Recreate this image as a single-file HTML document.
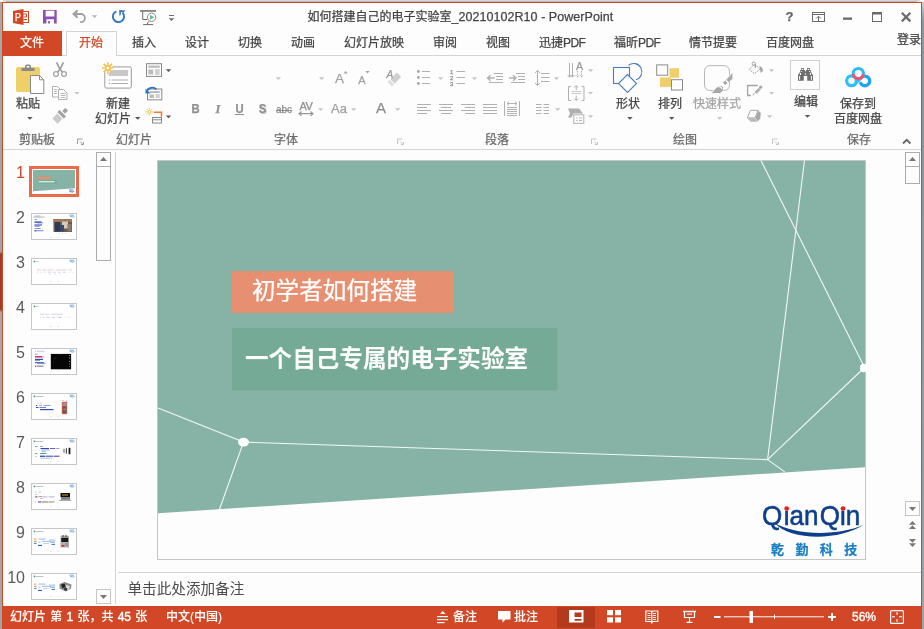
<!DOCTYPE html>
<html lang="zh-CN">
<head>
<meta charset="utf-8">
<title>如何搭建自己的电子实验室_20210102R10 - PowerPoint</title>
<style>
html,body{margin:0;padding:0}
body{width:924px;height:629px;position:relative;overflow:hidden;background:#9aa3a8;font-family:"Liberation Sans","Noto Sans CJK SC",sans-serif;font-size:12px;color:#444}
.a{position:absolute}
.t{position:absolute;white-space:nowrap;line-height:16px;height:16px;-webkit-text-stroke:0.250px currentColor}
.g{color:#6a6a6a}
.d{color:#a4a4a4}
#win{position:absolute;left:2px;top:2px;width:920px;height:627px;background:#fdfdfd;border:1px solid #d24726;border-bottom:0;box-sizing:border-box}
svg{position:absolute;overflow:visible}
.w{color:#fff;-webkit-text-stroke:0.100px #fff}
</style>
</head>
<body>
<div id="root" style="position:absolute;left:0;top:0;width:924px;height:629px;will-change:transform">
<div class="a" style="left:0;top:0;width:924px;height:1px;background:#d6d6d6"></div>
<div class="a" style="left:0;top:1px;width:924px;height:1px;background:#b4bcc0"></div>
<div class="a" style="left:0;top:0;width:3px;height:1px;background:#fff"></div>
<div class="a" style="left:0;top:1px;width:6px;height:1px;background:#e8eaea"></div>
<div class="a" style="left:920px;top:0;width:4px;height:1px;background:#fff"></div>
<div class="a" style="left:917px;top:1px;width:7px;height:1px;background:#e8eaea"></div>
<div class="a" style="left:0;top:2px;width:2px;height:627px;background:linear-gradient(#a8a8a8 0,#a0a4a8 38%,#a0a4a8 39.800%,#a03c28 40.200%,#a03c28 49%,#a8a8a8 49.500%,#a4a4a4 100%)"></div>
<div class="a" style="left:922px;top:2px;width:2px;height:627px;background:linear-gradient(#d0d0d0 0,#8a98a4 3%,#8a98a4 30%,#909ca4 60%,#a0a0a0 100%)"></div>
<div id="win"></div>
<!-- TITLEBAR -->
<div id="titlebar">
<div class="t" style="left:307.500px;top:9px;font-size:12px;color:#444">如何搭建自己的电子实验室<span style="font-size:12.500px;letter-spacing:0.050px">_20210102R10 - PowerPoint</span></div>
<div class="t" style="left:13px;top:10px;width:10px;height:14px;line-height:14px;font-size:11px;color:#fff;z-index:3;text-align:center;transform:scaleX(0.800)">P</div>
<div class="t" style="left:785px;top:9px;font-size:13px;font-weight:bold;color:#666;width:9px;text-align:center">?</div>
<svg class="a" style="left:0;top:0" width="924" height="34" viewBox="0 0 924 34">
<!-- ppt icon -->
<rect x="21.500" y="11.500" width="7" height="11" fill="#fff" stroke="#d24726" stroke-width="1"/>
<path d="M23.500,14 h3 v3 h-3 M23.500,19.500 h3.500" stroke="#d24726" stroke-width="1" fill="none"/>
<polygon points="13,11 23.500,9 23.500,25 13,23" fill="#d24726"/>
<!-- save -->
<path d="M43,10 h13.700 v13.600 h-13.700z M45.600,10.800 v5.600 h8.800 v-5.600z M46.400,19.300 v4.300 h1.800 v-2.500 h1.800 v2.500 h4 v-4.300z" fill="#8d4fb3" fill-rule="evenodd"/>
<!-- undo -->
<path d="M74.500,14 h6.300 a4.100,4.100 0 0 1 0,8.200 h-0.600" fill="none" stroke="#a0a0a0" stroke-width="1.800"/>
<path d="M72,14 L76.800,9.800 L78.200,10.300 L76.300,14 L78.200,17.700 L76.800,18.200z" fill="#a0a0a0"/>
<polygon points="91.900,15.200 97.300,15.200 94.600,18" fill="#b4b4b4"/>
<!-- redo -->
<path d="M122.600,12.700 A5.600,5.600 0 1 1 116.400,11.300" fill="none" stroke="#2e75c2" stroke-width="1.900"/>
<path d="M119.200,10 L125.300,10.400 L123.600,12.400 L121,12 L120.600,15.300 L119.400,15.700z" fill="#2e75c2"/>
<!-- slideshow from start -->
<rect x="140" y="10.200" width="16" height="1.500" fill="#6a6a6a"/>
<path d="M142.700,11.500 v8 h4.500 M148.500,21.500 l-1.500,3 M143.200,24.600 h10" fill="none" stroke="#6a6a6a" stroke-width="1"/>
<circle cx="151.600" cy="17.300" r="4.200" fill="#fff" stroke="#7a7a7a" stroke-width="0.900"/>
<polygon points="150,14.800 150,19.800 154.300,17.300" fill="#6cb893"/>
<!-- customize -->
<rect x="169" y="15" width="5" height="1" fill="#6a6a6a"/>
<polygon points="168.700,18.300 174.300,18.300 171.500,21" fill="#6a6a6a"/>
<!-- ribbon display -->
<rect x="812.500" y="12.500" width="12" height="9" fill="none" stroke="#6a6a6a" stroke-width="1"/>
<rect x="812" y="14" width="13" height="1" fill="#6a6a6a"/>
<path d="M818.500,16.300 v5 M816.200,18.500 l2.300,-2.300 l2.300,2.300" fill="none" stroke="#6a6a6a" stroke-width="1"/>
<!-- minimize -->
<rect x="843" y="17.500" width="9" height="2.300" fill="#6a6a6a"/>
<!-- maximize -->
<rect x="872.500" y="12.500" width="9" height="9" fill="none" stroke="#6a6a6a" stroke-width="1"/>
<rect x="872" y="12" width="10" height="2.500" fill="#6a6a6a"/>
<!-- close -->
<path d="M901.800,12.800 l8.600,8.600 M910.400,12.800 l-8.600,8.600" stroke="#6a6a6a" stroke-width="2.200" fill="none"/>
</svg>
</div>
<!-- TABS -->
<div id="tabs">
<div class="a" style="left:3px;top:55px;width:918px;height:1px;background:#d4d4d4"></div>
<div class="a" style="left:3px;top:31px;width:59px;height:25px;background:#d24726"></div>
<div class="t" style="left:20px;top:35px;color:#fff">文件</div>
<div class="a" style="left:66px;top:31px;width:51px;height:25px;background:#fdfdfd;border:1px solid #d4d4d4;border-bottom:0;box-sizing:border-box"></div>
<div class="t" style="left:79px;top:35px;color:#d24726">开始</div>
<div class="t" style="left:132px;top:35px">插入</div>
<div class="t" style="left:185px;top:35px">设计</div>
<div class="t" style="left:238px;top:35px">切换</div>
<div class="t" style="left:291px;top:35px">动画</div>
<div class="t" style="left:344px;top:35px">幻灯片放映</div>
<div class="t" style="left:433px;top:35px">审阅</div>
<div class="t" style="left:486px;top:35px">视图</div>
<div class="t" style="left:539px;top:35px">迅捷<span style="letter-spacing:-0.600px">PDF</span></div>
<div class="t" style="left:614px;top:35px">福昕<span style="letter-spacing:-0.600px">PDF</span></div>
<div class="t" style="left:689px;top:35px">情节提要</div>
<div class="t" style="left:766px;top:35px">百度网盘</div>
<div class="t" style="left:897px;top:32px">登录</div>
</div>
<!-- RIBBON -->
<div id="ribbon">
<div class="a" style="left:3px;top:149px;width:918px;height:1px;background:#d4d4d4"></div>
<!-- labels -->
<div class="t" style="left:16px;top:96px;width:24px;text-align:center">粘贴</div>
<div class="t g" style="left:19px;top:132px">剪贴板</div>
<div class="t" style="left:106px;top:96px">新建</div>
<div class="t" style="left:95px;top:111px">幻灯片</div>
<div class="t g" style="left:116px;top:132px">幻灯片</div>
<div class="t g" style="left:274px;top:132px">字体</div>
<div class="t g" style="left:485px;top:132px">段落</div>
<div class="t" style="left:616px;top:96px">形状</div>
<div class="t" style="left:658px;top:96px">排列</div>
<div class="t d" style="left:693px;top:96px">快速样式</div>
<div class="t g" style="left:673px;top:132px">绘图</div>
<div class="t" style="left:794px;top:94px">编辑</div>
<div class="t" style="left:840px;top:96px">保存到</div>
<div class="t" style="left:834px;top:111px">百度网盘</div>
<div class="t g" style="left:847px;top:132px">保存</div>
<!-- font buttons (disabled) -->
<div class="t" style="left:191px;top:101px;font-size:12.500px;font-weight:bold;color:#8e8e8e;width:9px;text-align:center;transform:scaleX(0.900)">B</div>
<div class="t" style="left:213.500px;top:101px;font-size:12.500px;font-style:italic;color:#8e8e8e;width:9px;text-align:center;font-family:'Liberation Serif',serif;font-weight:bold">I</div>
<div class="t" style="left:235px;top:101px;font-size:12.500px;color:#8e8e8e;width:9px;text-align:center;font-weight:bold;transform:scaleX(0.900)">U</div>
<div class="a" style="left:235px;top:114px;width:9px;height:1px;background:#8e8e8e"></div>
<div class="t" style="left:258px;top:101px;font-size:12.500px;font-weight:bold;color:#8e8e8e;width:9px;text-align:center;text-shadow:1px 1px 0 #ccc;transform:scaleX(0.900)">S</div>
<div class="t" style="left:276px;top:102px;font-size:10px;color:#8e8e8e;width:16px;text-align:center;text-decoration:line-through">abc</div>
<div class="t" style="left:298px;top:98px;font-size:11px;color:#8e8e8e;width:16px;text-align:center;letter-spacing:-0.500px">AV</div>
<div class="t" style="left:331px;top:101px;font-size:13px;color:#a0a0a0;width:15px;text-align:center">Aa</div>
<div class="t" style="left:376px;top:100px;font-size:15px;color:#8e8e8e;width:10px;text-align:center">A</div>
<div class="t" style="left:335px;top:71px;font-size:13.500px;color:#a0a0a0;width:9px;text-align:center">A</div>
<div class="t" style="left:357.500px;top:72px;font-size:11px;color:#a0a0a0;width:9px;text-align:center">A</div>
<svg class="a" style="left:0;top:0" width="924" height="152" viewBox="0 0 924 152">
<!-- dropdown arrows dark -->
<g fill="#555">
<polygon points="27.200,117 32.600,117 29.900,119.800"/>
<polygon points="135,117 140.400,117 137.700,119.800"/>
<polygon points="165.800,69.300 171.200,69.300 168.500,72"/>
<polygon points="165.800,115.500 171.200,115.500 168.500,118.200"/>
<polygon points="627.200,117 632.600,117 629.900,119.800"/>
<polygon points="669,117 674.400,117 671.700,119.800"/>
<polygon points="804.800,115 810.200,115 807.500,117.800"/>
</g>
<!-- dropdown arrows light -->
<g fill="#c4c4c4">
<polygon points="74.300,92 79.500,92 76.900,94.600"/>
<polygon points="275.800,77.300 281,77.300 278.400,80"/>
<polygon points="319,77.300 324.200,77.300 321.600,80"/>
<polygon points="318,108.200 323.200,108.200 320.600,110.900"/>
<polygon points="351,108.200 356.200,108.200 353.600,110.900"/>
<polygon points="395,108.200 400.200,108.200 397.600,110.900"/>
<polygon points="438,77.300 443.200,77.300 440.600,80"/>
<polygon points="472,77.300 477.200,77.300 474.600,80"/>
<polygon points="554,77.300 559.200,77.300 556.600,80"/>
<polygon points="555,108.200 560.200,108.200 557.600,110.900"/>
<polygon points="588,69.300 593.200,69.300 590.600,72"/>
<polygon points="588,92 593.200,92 590.600,94.600"/>
<polygon points="588,115.300 593.200,115.300 590.600,118"/>
<polygon points="717,117 722.200,117 719.600,119.700"/>
<polygon points="769,69.300 774.200,69.300 771.600,72"/>
<polygon points="769,92 774.200,92 771.600,94.600"/>
<polygon points="767,115.300 772.200,115.300 769.600,118"/>
</g>
<!-- grow/shrink triangles -->
<polygon points="343.400,73.600 347.800,73.600 345.600,71" fill="#a6a6a6"/>
<polygon points="365.300,71 369.700,71 367.500,73.600" fill="#a6a6a6"/>
<!-- dialog launchers -->
<g fill="none" stroke="#9a9a9a" stroke-width="1">
<path d="M82.500,139 h-5 v5 M80,141.500 l3,3 M83.500,142 v2.500 h-2.500"/>
<path d="M402.500,139 h-5 v5 M400,141.500 l3,3 M403.500,142 v2.500 h-2.500" stroke="#c4c4c4"/>
<path d="M596.500,139 h-5 v5 M594,141.500 l3,3 M597.500,142 v2.500 h-2.500" stroke="#c4c4c4"/>
<path d="M777.500,139 h-5 v5 M775,141.500 l3,3 M778.500,142 v2.500 h-2.500" stroke="#c4c4c4"/>
</g>
<!-- collapse chevron -->
<path d="M903,143.500 l3.700,-3.700 l3.700,3.700" fill="none" stroke="#666" stroke-width="1.800"/>

<!-- PASTE -->
<rect x="16" y="67" width="24" height="25" rx="2" fill="#efcf6a"/>
<path d="M21.500,71 v-3 h3.500 v-1.500 a2,2 0 0 1 2,-2 h2 a2,2 0 0 1 2,2 v1.500 h3.500 v3z" fill="#8a8a8a"/>
<rect x="26.700" y="66" width="2.600" height="1.500" fill="#fff"/>
<path d="M30.500,75.500 h9 l4.300,4.300 v13.700 h-13.300z" fill="#fff" stroke="#8a8a8a" stroke-width="1"/>
<path d="M39.500,75.500 v4.300 h4.300" fill="none" stroke="#8a8a8a" stroke-width="1"/>
<!-- scissors -->
<g fill="none" stroke="#a0a0a0">
<circle cx="56" cy="74" r="2.400" stroke-width="1.200"/><circle cx="64" cy="74" r="2.400" stroke-width="1.200"/>
<path d="M57.600,72 L60,69.300 L63.400,62.300 M62.400,72 L60,69.300 L56.600,62.300" stroke-width="1.700" stroke-linejoin="round"/>
</g>
<!-- copy -->
<g fill="#fff" stroke="#b0b0b0" stroke-width="1">
<path d="M52.500,86.500 h5 l3,3 v7.500 h-8z"/>
<path d="M58.500,89.500 h5 l3.500,3.500 v6.500 h-8.500z"/>
</g>
<path d="M54,89.500 h3 M54,91.500 h3 M54,93.500 h3 M60.500,93.500 h5 M60.500,95.500 h5 M60.500,97.500 h5" stroke="#b0b0b0" stroke-width="0.900" fill="none"/>
<!-- format painter -->
<g transform="translate(60.700,115.300) rotate(-45)">
<rect x="-8.200" y="-3.600" width="7" height="7.200" fill="#cbcbcb"/>
<rect x="-0.200" y="-4.600" width="3.200" height="9.200" rx="0.500" fill="#a4a4a4"/>
<rect x="4.300" y="-1.900" width="4.200" height="3.800" rx="0.500" fill="#a0a0a0"/>
</g>

<!-- NEW SLIDE -->
<rect x="104.800" y="66.900" width="26.500" height="21.200" rx="1.500" fill="#fff" stroke="#999" stroke-width="1"/>
<rect x="108.600" y="70" width="19.500" height="6" fill="#c8c8c8"/>
<path d="M108.600,80 h1.500 M111.500,80 h16.500 M108.600,83.500 h1.500 M111.500,83.500 h16.500" stroke="#aaa" stroke-width="1" fill="none"/>
<circle cx="107.800" cy="68" r="5" fill="#fff"/>
<circle cx="107.800" cy="68" r="2.400" fill="#fff" stroke="#f2c14a" stroke-width="1.600"/>
<path d="M107.800,62.200 v2.600 M107.800,71.200 v2.600 M102,68 h2.600 M111,68 h2.600 M103.700,63.900 l1.900,1.900 M110,70.200 l1.900,1.900 M103.700,72.100 l1.900,-1.900 M110,65.800 l1.900,-1.900" stroke="#f2c14a" stroke-width="1.700" fill="none"/>
<!-- layout -->
<rect x="146.500" y="63.700" width="15" height="12.700" fill="#fff" stroke="#888" stroke-width="1"/>
<rect x="148.300" y="65.500" width="11.400" height="2.300" fill="#bbb"/>
<rect x="148.300" y="69.500" width="5" height="5" fill="#bbb"/>
<path d="M155,70 h4.700 M155,72 h4.700 M155,74 h4.700" stroke="#999" stroke-width="0.900" fill="none"/>
<!-- reset -->
<rect x="147.500" y="89" width="14.300" height="10.800" fill="#fff" stroke="#888" stroke-width="1"/>
<rect x="149.500" y="91" width="10.300" height="2" fill="#bbb"/>
<rect x="149.500" y="94.500" width="4.500" height="3.500" fill="#bbb"/>
<path d="M155.500,95 h4.300 M155.500,97 h4.300" stroke="#999" stroke-width="0.900" fill="none"/>
<path d="M146.500,92.500 c1,-5 7,-6.500 10,-3" fill="none" stroke="#2e75c2" stroke-width="1.700"/>
<path d="M145.500,88.500 v5 h5z" fill="#2e75c2"/>
<!-- section -->
<circle cx="149.300" cy="111.800" r="1.500" fill="none" stroke="#f0c24e" stroke-width="1"/>
<path d="M149.300,108 v1.500 M149.300,114 v1.500 M145.500,111.800 h1.500 M151.500,111.800 h1.500 M146.600,109.100 l1,1 M151,113.500 l1,1 M146.600,114.500 l1,-1 M151,110.100 l1,-1" stroke="#f0c24e" stroke-width="1" fill="none"/>
<path d="M154,112.300 h7.500 v4.500" fill="none" stroke="#ed7d31" stroke-width="1.600"/>
<rect x="152.500" y="117.500" width="9" height="5.500" fill="#fff" stroke="#888" stroke-width="1"/>
<path d="M152.500,119.800 h9" stroke="#888" stroke-width="1"/>

<!-- clear formatting -->
<g transform="translate(395.800,78) rotate(-45)">
<rect x="-4.600" y="-3.100" width="9.200" height="6.200" rx="0.800" fill="#d0d0d0"/>
<rect x="-8.600" y="-3.100" width="3" height="6.200" fill="#dcdcdc"/>
</g>
<!-- AV arrow -->
<path d="M299,113.700 h14 M301.500,111.500 l-2.500,2.200 l2.500,2.200 M310.500,111.500 l2.500,2.200 l-2.500,2.200" fill="none" stroke="#989898" stroke-width="1.200"/>

<!-- PARAGRAPH -->
<g fill="none" stroke="#b0b0b0" stroke-width="1">
<path d="M422,71.500 h8 M422,77.500 h8 M422,83.500 h8"/>
<path d="M456.500,71.500 h8.500 M456.500,77.500 h8.500 M456.500,83.500 h8.500"/>
<!-- decrease indent -->
<path d="M494,73.500 h9 M496,76.500 h7 M496,79.500 h7 M489,82.500 h14" stroke-dasharray="none"/>
<path d="M487.500,78 h7 M490.500,75.300 l-3,2.700 l3,2.700" stroke-width="1.400"/>
<!-- increase indent -->
<path d="M516,73.500 h9 M518,76.500 h7 M518,79.500 h7 M511,82.500 h14"/>
<path d="M509,78 h7 M513,75.300 l3,2.700 l-3,2.700" stroke-width="1.400"/>
<!-- line spacing -->
<path d="M541,73.500 h8.500 M541,77.500 h8.500 M541,81.500 h8.500"/>
<path d="M537.500,70.500 v15 M535,73.200 l2.500,-2.700 l2.500,2.700 M535,82.800 l2.500,2.700 l2.500,-2.700" stroke-width="1"/>
<!-- align left -->
<path d="M417,104.500 h14 M417,107.500 h10 M417,110.500 h14 M417,113.500 h10"/>
<path d="M439,104.500 h14 M441,107.500 h10 M439,110.500 h14 M441,113.500 h10"/>
<path d="M461,104.500 h14 M465,107.500 h10 M461,110.500 h14 M465,113.500 h10"/>
<path d="M483,104.500 h14 M483,107.500 h14 M483,110.500 h14 M483,113.500 h14"/>
<!-- distributed -->
<path d="M504.500,101 v15 M519.500,101 v15 M507,107.500 h10 M507,109.500 h10 M507,111.500 h10 M507,113.500 h10 M507,115.500 h10"/>
<path d="M507,103.500 h10 M509,101.700 l-2,1.800 l2,1.800 M515,101.700 l2,1.800 l-2,1.800"/>
<!-- columns -->
<path d="M536,104.500 h5.500 M536,107.500 h5.500 M536,110.500 h5.500 M536,113.500 h5.500 M543.500,104.500 h5.500 M543.500,107.500 h5.500 M543.500,110.500 h5.500 M543.500,113.500 h5.500" stroke-width="1.200"/>
<!-- text direction -->
<path d="M569.500,63 v14 M572.500,63 v14 M567.700,75 l1.800,2.200 l1.800,-2.200 M570.700,75 l1.800,2.200 l1.800,-2.200"/>
<path d="M577.500,71 v6 M581.500,71 v6 M575.700,75 l1.800,2.200 l1.800,-2.200 M579.700,75 l1.800,2.200 l1.800,-2.200" stroke-dasharray="1.500,1"/>
<!-- align text -->
<path d="M571,86.500 h-2.500 v14 h2.500 M581.500,86.500 h2.500 v14 h-2.500"/>
<path d="M571.500,91.500 h9.500 M571.500,93.500 h9.500" stroke="#c8c8c8"/>
<path d="M576.200,85.500 v4.500 M574.200,87.500 l2,-2 l2,2 M576.200,95.500 v5 M574.200,98.500 l2,2 l2,-2"/>
</g>
<g fill="#a8a8a8">
<circle cx="418.400" cy="71.500" r="1.450"/><circle cx="418.400" cy="77.500" r="1.450"/><circle cx="418.400" cy="83.500" r="1.450"/>
</g>
<!-- smartart -->
<path d="M568,108.500 h11 l4,5 h-9.500 l-2,4 h-3.500 l2,-4z" fill="#b0b0b0"/>
<rect x="573.800" y="114.800" width="10" height="8.500" fill="#fff" stroke="#b0b0b0" stroke-width="1"/>
<path d="M576,118 h1.500 M579,118 h3 M576,120.500 h1.500 M579,120.500 h3" stroke="#b0b0b0" stroke-width="0.900"/>

<!-- SHAPES -->
<g fill="none" stroke="#4a7ebb" stroke-width="1.100">
<path d="M628.500,65.200 a8.300,8.300 0 1 1 7.500,14.500"/>
<rect x="613.500" y="67.500" width="16" height="16" fill="#fdfdfd"/>
<path d="M627.500,74.500 l9,9 l-9,9 l-9,-9z" fill="#fff"/>
</g>
<!-- ARRANGE -->
<rect x="669.500" y="68.200" width="9.600" height="9.500" fill="#efcf6a"/>
<rect x="660" y="77.400" width="11" height="9.500" fill="#efcf6a"/>
<rect x="656.700" y="64.900" width="11" height="10.300" fill="#fff" stroke="#8a8a8a" stroke-width="1"/>
<rect x="671.500" y="79.700" width="11" height="10.300" fill="#fff" stroke="#8a8a8a" stroke-width="1"/>
<!-- QUICK STYLES -->
<rect x="704.500" y="65.600" width="25" height="25" rx="5.500" fill="#fdfdfd" stroke="#b8b8b8" stroke-width="1"/>
<g stroke="#fdfdfd" stroke-width="0.900" stroke-linejoin="round">
<path d="M732.900,72 L732.900,79 L728.600,82.600 L725.800,79.800z" fill="#a8a8a8"/>
<path d="M722.600,82.600 L725.300,80.300 L727.800,82.900 L725.100,85.400z" fill="#a0a0a0"/>
<path d="M710.900,93.600 C714,90.500 716,87 719,85.600 C721.500,84.800 723.900,86.600 723.700,89 C723,91.500 721.500,93 719.500,93.600z" fill="#a8a8a8"/>
</g>
<path d="M718.300,87 c1.200,-0.900 3.200,0 3.600,2.200" fill="none" stroke="#fdfdfd" stroke-width="1.200"/>
<!-- fill / outline / effects -->
<g fill="none" stroke="#a4a4a4" stroke-width="1">
<path d="M749.300,69.400 L754.700,64 L760,69.400 L754.300,73.700z" stroke-dasharray="1.800,0.700"/>
<circle cx="753.800" cy="63.700" r="1.700"/>
<path d="M755.400,64.500 v3.500" stroke-width="1.200"/>
<path d="M757.800,85.500 h-10.200 v10 h3.300" stroke-width="1.300"/>
</g>
<path d="M759,66 c2.500,0.500 4.200,2.500 3.800,5 l-2.300,2 c0,-3 -0.500,-5 -1.500,-7z" fill="#a0a0a0"/>
<path d="M752.300,95.400 l1.500,-2.600 l1.100,1.100z" fill="#b0b0b0"/>
<path d="M754.500,92 l4.300,-4.200 l1.900,1.900 l-4.300,4.200z" fill="#b0b0b0"/>
<circle cx="760.700" cy="87.200" r="1.600" fill="#a8a8a8"/>
<path d="M750.400,110.300 L758,110.300 L755.200,117.900 L747.300,117.900z" fill="#fdfdfd" stroke="#a8a8a8" stroke-width="1" stroke-linejoin="round"/>
<path d="M758.300,110.500 L760.800,113 L760.300,118.500 L757.600,121.500 L755.500,118z" fill="#a8a8a8"/>
<path d="M747.300,118.300 L755.200,118.300 L757.400,121.700 L750.800,121.700z" fill="#b8b8b8"/>
<!-- EDIT -->
<rect x="790.500" y="60.500" width="29" height="29" fill="#fdfdfd" stroke="#d0d0d0" stroke-width="1"/>
<g fill="#6e6e6e">
<rect x="801.200" y="68" width="2.600" height="3"/><rect x="807.200" y="68" width="2.600" height="3"/>
<rect x="800.200" y="70" width="4.700" height="5.500"/><rect x="806.100" y="70" width="4.700" height="5.500"/>
<rect x="798" y="74.300" width="5.800" height="6.400" rx="0.500"/><rect x="807.200" y="74.300" width="5.800" height="6.400" rx="0.500"/>
<rect x="799.200" y="72.500" width="2" height="3"/><rect x="809.800" y="72.500" width="2" height="3"/>
<rect x="803.800" y="71.300" width="3.400" height="4.700"/>
</g>
<g fill="#fdfdfd">
<rect x="799.100" y="76" width="1" height="3.800"/><rect x="810.900" y="76" width="1" height="3.800"/>
<rect x="800" y="73" width="1" height="2"/><rect x="810" y="73" width="1" height="2"/>
<circle cx="802.500" cy="69.400" r="0.550"/><circle cx="808.500" cy="69.400" r="0.550"/>
<circle cx="801.400" cy="71.500" r="0.550"/><circle cx="809.600" cy="71.500" r="0.550"/>
<circle cx="805.500" cy="74" r="0.650"/>
</g>
<!-- BAIDU -->
<g fill="none">
<path d="M854.300,84.300 L861.500,77" stroke="#2cbaf5" stroke-width="3.600"/>
<path d="M860.700,83.400 A4.850,4.850 0 1 0 861.200,77.700" stroke="#1ca4f8" stroke-width="3.300" stroke-linecap="round"/>
<circle cx="851.500" cy="80.800" r="4.850" stroke="#2cc0f5" stroke-width="3.300" fill="#fdfdfd"/>
<circle cx="858.300" cy="73.500" r="5.100" stroke="#30b8f8" stroke-width="3" fill="#fdfdfd"/>
<path d="M853.250,74.200 A5.100,5.100 0 0 0 863.350,74.200" stroke="#f0556c" stroke-width="3"/>
</g>
</svg>
<div class="t" style="left:450px;top:67.500px;height:8px;line-height:8px;font-size:6px;color:#909090">1</div>
<div class="t" style="left:450px;top:73.500px;height:8px;line-height:8px;font-size:6px;color:#909090">2</div>
<div class="t" style="left:450px;top:79.500px;height:8px;line-height:8px;font-size:6px;color:#909090">3</div>
<div class="t" style="left:576px;top:61px;height:10px;line-height:10px;font-size:10.500px;color:#999">A</div>
<div class="t" style="left:386.500px;top:70px;height:10px;line-height:10px;font-size:10px;color:#999;font-style:italic">A</div>
</div>
<!-- THUMBS -->
<div id="thumbs">
<div class="a" style="left:115px;top:152px;width:1px;height:452px;background:#d4d4d4"></div>
<div class="t" style="left:0px;width:25px;text-align:right;top:164px;height:18px;line-height:18px;font-size:16px;-webkit-text-stroke:0;color:#d24726">1</div>
<div class="a" style="left:29px;top:166px;width:50px;height:31px;box-sizing:border-box;border:3px solid #ea6b47;background:#fff"></div>
<svg class="a" style="left:33px;top:170px" width="42" height="24" viewBox="0 0 42 24"><rect width="42" height="24" fill="#fff"/><polygon points="0,0 42,0 42,18.300 0,21.200" fill="#86b3a5"/><rect x="4.400" y="6.600" width="13" height="2.500" fill="#e68f71"/><rect x="4.400" y="10" width="19.300" height="3.700" fill="#75ab96"/><rect x="5.500" y="11.300" width="16" height="1" fill="#fff"/><path d="M36,20 h4.500 M36.500,21.500 l3.500,0.600 l1,-1" stroke="#3b6fb0" stroke-width="0.900" fill="none"/></svg>
<div class="t" style="left:0px;width:25px;text-align:right;top:209px;height:18px;line-height:18px;font-size:16px;-webkit-text-stroke:0;color:#5a5a5a">2</div>
<div class="a" style="left:31px;top:213px;width:46px;height:27px;box-sizing:border-box;border:1px solid #c6c6c6;background:#fff"></div>
<svg class="a" style="left:31px;top:213px" width="46" height="27" viewBox="0 0 46 27"><path d="M38.500,2.200 h4.500 M39,3.500 l3.500,0.600 l1,-1" stroke="#4a8ac0" stroke-width="0.900" fill="none" opacity="0.800"/><rect x="2.500" y="3.800" width="11" height="0.500" fill="#666"/><rect x="3.500" y="2.600" width="6" height="0.800" fill="#6a8ad0" opacity="0.700"/><rect x="3.5" y="6" width="2.5" height="0.8" fill="#7a8ad8" opacity="1"/><rect x="3.5" y="8.4" width="7" height="1.4" fill="#3050b0" opacity="1"/><rect x="6" y="9.5" width="6" height="0.8" fill="#5a6ac8" opacity="1"/><rect x="3.5" y="11.4" width="7.5" height="1.2" fill="#4060c0" opacity="1"/><rect x="3.5" y="12.8" width="5" height="0.8" fill="#7a5ac8" opacity="1"/><rect x="3.5" y="15" width="6" height="0.8" fill="#6a7ad0" opacity="1"/><rect x="3.5" y="17.2" width="2" height="1.2" fill="#3040a0" opacity="1"/><rect x="5.5" y="17.4" width="7" height="0.8" fill="#5a6ac8" opacity="1"/><rect x="22.500" y="6" width="18.500" height="13" fill="#6a5a52"/><rect x="22.500" y="6" width="18.500" height="3" fill="#a07858"/><rect x="24" y="9" width="5" height="9.500" fill="#2a3a5a"/><rect x="31" y="8.500" width="6" height="7" fill="#d8c8b8"/><rect x="29" y="12" width="4" height="6.500" fill="#3a4a6a"/><rect x="36.500" y="11" width="4" height="7.500" fill="#8a7a6a"/><rect x="28" y="20.3" width="1" height="0.6" fill="#9cc0e8" opacity="1"/><rect x="31" y="20.3" width="1" height="0.6" fill="#e8a0a0" opacity="1"/><rect x="34" y="20.3" width="1" height="0.6" fill="#9cc0e8" opacity="1"/><rect x="19.500" y="24" width="1" height="0.600" fill="#9cc0e8"/><rect x="26.500" y="24" width="1" height="0.600" fill="#9cc0e8"/></svg>
<div class="t" style="left:0px;width:25px;text-align:right;top:254px;height:18px;line-height:18px;font-size:16px;-webkit-text-stroke:0;color:#5a5a5a">3</div>
<div class="a" style="left:31px;top:258px;width:46px;height:27px;box-sizing:border-box;border:1px solid #c6c6c6;background:#fff"></div>
<svg class="a" style="left:31px;top:258px" width="46" height="27" viewBox="0 0 46 27"><path d="M38.500,2.200 h4.500 M39,3.500 l3.500,0.600 l1,-1" stroke="#4a8ac0" stroke-width="0.900" fill="none" opacity="0.800"/><rect x="2.600" y="2.600" width="1.600" height="1.600" fill="#4a9a7a"/><rect x="4.800" y="3.200" width="2.5" height="0.700" fill="#9aa"/><rect x="6" y="11.6" width="4" height="0.7" fill="#d8b0a0" opacity="0.8"/><rect x="11.5" y="11.6" width="4" height="0.7" fill="#c0a8d8" opacity="0.8"/><rect x="16.5" y="11.6" width="6" height="0.7" fill="#d0b0b0" opacity="0.8"/><rect x="24.5" y="11.6" width="11" height="0.7" fill="#c8b0c8" opacity="0.8"/><rect x="37" y="11.6" width="4" height="0.7" fill="#d8c0a0" opacity="0.8"/><rect x="6" y="13.8" width="0.8" height="0.7" fill="#90b0e0" opacity="0.8"/><rect x="9" y="13.8" width="0.8" height="0.7" fill="#e0b080" opacity="0.8"/><rect x="11.5" y="13.8" width="0.8" height="0.7" fill="#90b0e0" opacity="0.8"/><rect x="14" y="13.8" width="0.8" height="0.7" fill="#a0a0e0" opacity="0.8"/><rect x="17" y="13.8" width="3" height="0.7" fill="#c0a0d0" opacity="0.8"/><rect x="22" y="13.8" width="3" height="0.7" fill="#a0c0e0" opacity="0.8"/><rect x="27" y="13.8" width="3" height="0.7" fill="#d0b0c0" opacity="0.8"/><rect x="32" y="13.8" width="2.5" height="0.7" fill="#a0a0e0" opacity="0.8"/><rect x="38" y="13.8" width="0.8" height="0.7" fill="#90b0e0" opacity="0.8"/><rect x="41.5" y="13.8" width="0.8" height="0.7" fill="#90b0e0" opacity="0.8"/><rect x="18.5" y="15.8" width="0.9" height="0.7" fill="#7090e0" opacity="0.8"/><rect x="23.5" y="15.8" width="0.9" height="0.7" fill="#a090e0" opacity="0.8"/><rect x="28" y="15.8" width="0.9" height="0.7" fill="#d090e0" opacity="0.8"/><rect x="19.500" y="23" width="1" height="0.600" fill="#9cc0e8"/><rect x="26.500" y="23" width="1" height="0.600" fill="#9cc0e8"/></svg>
<div class="t" style="left:0px;width:25px;text-align:right;top:299px;height:18px;line-height:18px;font-size:16px;-webkit-text-stroke:0;color:#5a5a5a">4</div>
<div class="a" style="left:31px;top:303px;width:46px;height:27px;box-sizing:border-box;border:1px solid #c6c6c6;background:#fff"></div>
<svg class="a" style="left:31px;top:303px" width="46" height="27" viewBox="0 0 46 27"><path d="M38.500,2.200 h4.500 M39,3.500 l3.500,0.600 l1,-1" stroke="#4a8ac0" stroke-width="0.900" fill="none" opacity="0.800"/><rect x="2.600" y="2.600" width="1.600" height="1.600" fill="#4a9a7a"/><rect x="4.800" y="3.200" width="2.5" height="0.700" fill="#9aa"/><rect x="9" y="10.8" width="4" height="0.7" fill="#c0a8d8" opacity="0.8"/><rect x="14" y="10.8" width="4.5" height="0.7" fill="#c8b0c8" opacity="0.8"/><rect x="20" y="10.8" width="11.5" height="0.7" fill="#b8b0d0" opacity="0.8"/><rect x="9" y="13.8" width="0.8" height="0.7" fill="#a0a0e0" opacity="0.8"/><rect x="11.5" y="13.8" width="2" height="0.7" fill="#c0a0d0" opacity="0.8"/><rect x="15.5" y="13.8" width="3" height="0.7" fill="#a0a0e0" opacity="0.8"/><rect x="21" y="13.8" width="3" height="0.7" fill="#b0a0e0" opacity="0.8"/><rect x="25" y="13.8" width="0.8" height="0.7" fill="#e0a080" opacity="0.8"/><rect x="27" y="13.8" width="3.5" height="0.7" fill="#9090c0" opacity="0.8"/><rect x="33.5" y="13.8" width="0.8" height="0.7" fill="#e0c080" opacity="0.8"/><rect x="36" y="13.8" width="0.8" height="0.7" fill="#e0b080" opacity="0.8"/><rect x="38" y="13.8" width="0.8" height="0.7" fill="#e0b080" opacity="0.8"/><rect x="19.500" y="23" width="1" height="0.600" fill="#9cc0e8"/><rect x="26.500" y="23" width="1" height="0.600" fill="#9cc0e8"/></svg>
<div class="t" style="left:0px;width:25px;text-align:right;top:344px;height:18px;line-height:18px;font-size:16px;-webkit-text-stroke:0;color:#5a5a5a">5</div>
<div class="a" style="left:31px;top:348px;width:46px;height:27px;box-sizing:border-box;border:1px solid #c6c6c6;background:#fff"></div>
<svg class="a" style="left:31px;top:348px" width="46" height="27" viewBox="0 0 46 27"><path d="M38.500,2.200 h4.500 M39,3.500 l3.500,0.600 l1,-1" stroke="#4a8ac0" stroke-width="0.900" fill="none" opacity="0.800"/><rect x="4" y="2.800" width="1" height="0.700" fill="#e0a060"/><rect x="6" y="2.800" width="7.500" height="0.700" fill="#a0b0d0"/><rect x="4" y="5.8" width="2.5" height="0.8" fill="#7080c0" opacity="1"/><rect x="4" y="8" width="7" height="1.5" fill="#d03060" opacity="1"/><rect x="10" y="8.6" width="3.5" height="0.8" fill="#8090c0" opacity="1"/><rect x="4" y="10.8" width="8" height="1.2" fill="#3050b0" opacity="1"/><rect x="4" y="12.2" width="5" height="0.8" fill="#7080d0" opacity="1"/><rect x="4" y="14" width="9" height="1.2" fill="#5070c0" opacity="1"/><rect x="6" y="15.3" width="8.5" height="0.8" fill="#6080c8" opacity="1"/><rect x="4" y="17.6" width="1" height="1.2" fill="#3040a0" opacity="1"/><rect x="5.5" y="17.6" width="7" height="1" fill="#6a6a78" opacity="1"/><rect x="19.800" y="5.900" width="20.300" height="15.400" fill="#060606"/><rect x="38" y="7" width="1.2" height="1" fill="#c08020" opacity="1"/><rect x="38" y="9.5" width="1.2" height="1" fill="#c0a020" opacity="1"/><rect x="38" y="13" width="1.2" height="1" fill="#c0a020" opacity="1"/><rect x="38" y="15.5" width="1.2" height="1" fill="#c06020" opacity="1"/><rect x="38" y="18" width="1.2" height="1" fill="#a04020" opacity="1"/><rect x="23.5" y="10.3" width="1" height="0.8" fill="#207020" opacity="1"/><rect x="22" y="13.5" width="1" height="0.8" fill="#802020" opacity="1"/><rect x="28" y="6.4" width="1" height="0.6" fill="#a02020" opacity="1"/><rect x="19.500" y="23" width="1" height="0.600" fill="#9cc0e8"/><rect x="26.500" y="23" width="1" height="0.600" fill="#9cc0e8"/></svg>
<div class="t" style="left:0px;width:25px;text-align:right;top:389px;height:18px;line-height:18px;font-size:16px;-webkit-text-stroke:0;color:#5a5a5a">6</div>
<div class="a" style="left:31px;top:393px;width:46px;height:27px;box-sizing:border-box;border:1px solid #c6c6c6;background:#fff"></div>
<svg class="a" style="left:31px;top:393px" width="46" height="27" viewBox="0 0 46 27"><path d="M38.500,2.200 h4.500 M39,3.500 l3.500,0.600 l1,-1" stroke="#4a8ac0" stroke-width="0.900" fill="none" opacity="0.800"/><rect x="2.600" y="2.600" width="1.600" height="1.600" fill="#4a9a7a"/><rect x="4.800" y="3.200" width="7.5" height="0.700" fill="#9aa"/><rect x="6" y="9.8" width="1.5" height="0.6" fill="#a0a0e0" opacity="1"/><rect x="9" y="9.8" width="2" height="0.6" fill="#e0a0a0" opacity="1"/><rect x="5" y="12" width="1.2" height="1" fill="#3050b0" opacity="1"/><rect x="8" y="12" width="3" height="0.7" fill="#8090d0" opacity="1"/><rect x="12.5" y="12" width="7" height="0.8" fill="#7090d0" opacity="1"/><rect x="5" y="14" width="2.5" height="1" fill="#3040a0" opacity="1"/><rect x="8.5" y="14" width="6.5" height="0.8" fill="#5060b0" opacity="1"/><rect x="9" y="16" width="13.5" height="1.2" fill="#3050b0" opacity="1"/><rect x="30.800" y="8.800" width="5.400" height="12.400" rx="1" fill="#d85a40"/><rect x="31.600" y="9.800" width="3.800" height="3.200" fill="#8a9aa0"/><rect x="31.600" y="13.600" width="3.800" height="6.400" fill="#5a5a5a"/><circle cx="33.500" cy="16.500" r="1.300" fill="#888"/><rect x="30.5" y="7" width="2.5" height="0.5" fill="#999" opacity="0.8"/><rect x="34.5" y="7" width="2" height="0.5" fill="#999" opacity="0.8"/><rect x="19.500" y="23" width="1" height="0.600" fill="#9cc0e8"/><rect x="26.500" y="23" width="1" height="0.600" fill="#9cc0e8"/></svg>
<div class="t" style="left:0px;width:25px;text-align:right;top:434px;height:18px;line-height:18px;font-size:16px;-webkit-text-stroke:0;color:#5a5a5a">7</div>
<div class="a" style="left:31px;top:438px;width:46px;height:27px;box-sizing:border-box;border:1px solid #c6c6c6;background:#fff"></div>
<svg class="a" style="left:31px;top:438px" width="46" height="27" viewBox="0 0 46 27"><path d="M38.500,2.200 h4.500 M39,3.500 l3.500,0.600 l1,-1" stroke="#4a8ac0" stroke-width="0.900" fill="none" opacity="0.800"/><rect x="2.600" y="2.600" width="1.600" height="1.600" fill="#4a9a7a"/><rect x="4.800" y="3.200" width="7.5" height="0.700" fill="#9aa"/><rect x="4" y="8" width="2.5" height="0.7" fill="#5070c0" opacity="1"/><rect x="9" y="8" width="3" height="0.7" fill="#7080c0" opacity="1"/><rect x="9.5" y="10" width="8.5" height="1" fill="#3050b0" opacity="1"/><rect x="19" y="10" width="5" height="1" fill="#7a5ac8" opacity="1"/><rect x="24.5" y="10" width="4" height="0.8" fill="#8090d0" opacity="1"/><rect x="10.5" y="11.6" width="8" height="0.7" fill="#6080c8" opacity="1"/><rect x="10.5" y="13" width="4" height="0.7" fill="#8090d0" opacity="1"/><rect x="4" y="15" width="2.5" height="0.7" fill="#5070c0" opacity="1"/><rect x="9" y="15" width="6.5" height="0.9" fill="#409080" opacity="1"/><rect x="4" y="18" width="1.5" height="0.7" fill="#90b0e0" opacity="1"/><rect x="9" y="17.6" width="5" height="1.3" fill="#3050b0" opacity="1"/><rect x="14.5" y="17.6" width="8" height="1.3" fill="#6070c0" opacity="1"/><rect x="23" y="17.6" width="5.5" height="1.3" fill="#7a5ac8" opacity="1"/><rect x="9" y="19.8" width="12" height="0.6" fill="#8090d0" opacity="1"/><rect x="32.200" y="10.800" width="1.600" height="4" fill="#999"/><rect x="34.800" y="10.200" width="1.200" height="5.500" fill="#555"/><rect x="37.600" y="9.800" width="1.800" height="6.400" fill="#1a1a1a"/><rect x="19.500" y="23" width="1" height="0.600" fill="#9cc0e8"/><rect x="26.500" y="23" width="1" height="0.600" fill="#9cc0e8"/></svg>
<div class="t" style="left:0px;width:25px;text-align:right;top:479px;height:18px;line-height:18px;font-size:16px;-webkit-text-stroke:0;color:#5a5a5a">8</div>
<div class="a" style="left:31px;top:483px;width:46px;height:27px;box-sizing:border-box;border:1px solid #c6c6c6;background:#fff"></div>
<svg class="a" style="left:31px;top:483px" width="46" height="27" viewBox="0 0 46 27"><path d="M38.500,2.200 h4.500 M39,3.500 l3.500,0.600 l1,-1" stroke="#4a8ac0" stroke-width="0.900" fill="none" opacity="0.800"/><rect x="2.600" y="2.600" width="1.600" height="1.600" fill="#4a9a7a"/><rect x="4.800" y="3.200" width="7.5" height="0.700" fill="#9aa"/><rect x="4" y="8.8" width="1.2" height="0.7" fill="#e0a060" opacity="1"/><rect x="7.5" y="8.8" width="2.5" height="0.7" fill="#a0b0e0" opacity="1"/><rect x="4.5" y="11" width="1.5" height="0.7" fill="#90a0e0" opacity="1"/><rect x="4" y="13.4" width="2.5" height="1" fill="#3050b0" opacity="1"/><rect x="7.5" y="13.2" width="4" height="0.9" fill="#c08080" opacity="1"/><rect x="12" y="13.6" width="4.5" height="0.7" fill="#9090c0" opacity="1"/><rect x="17.5" y="13.6" width="6" height="0.7" fill="#8090c0" opacity="1"/><rect x="9" y="15" width="3" height="0.6" fill="#a0a0d0" opacity="1"/><rect x="4" y="18.6" width="1" height="0.8" fill="#e08040" opacity="1"/><rect x="7" y="18.3" width="3" height="1.3" fill="#7a5ac8" opacity="1"/><rect x="10.5" y="18.3" width="7" height="1.3" fill="#a09080" opacity="1"/><rect x="18" y="18.3" width="5.5" height="1.3" fill="#c0a080" opacity="1"/><rect x="29.500" y="10" width="9.500" height="4.200" fill="#101010"/><rect x="30" y="14.200" width="9" height="2.600" fill="#777"/><rect x="28" y="16.800" width="12" height="1.200" fill="#aaa"/><rect x="31" y="11.500" width="6" height="1" fill="#c0a020"/><rect x="19.500" y="23" width="1" height="0.600" fill="#9cc0e8"/><rect x="26.500" y="23" width="1" height="0.600" fill="#9cc0e8"/></svg>
<div class="t" style="left:0px;width:25px;text-align:right;top:524px;height:18px;line-height:18px;font-size:16px;-webkit-text-stroke:0;color:#5a5a5a">9</div>
<div class="a" style="left:31px;top:528px;width:46px;height:27px;box-sizing:border-box;border:1px solid #c6c6c6;background:#fff"></div>
<svg class="a" style="left:31px;top:528px" width="46" height="27" viewBox="0 0 46 27"><path d="M38.500,2.200 h4.500 M39,3.500 l3.500,0.600 l1,-1" stroke="#4a8ac0" stroke-width="0.900" fill="none" opacity="0.800"/><rect x="2.600" y="2.600" width="1.600" height="1.600" fill="#4a9a7a"/><rect x="4.800" y="3.200" width="7.5" height="0.700" fill="#9aa"/><rect x="3" y="10.7" width="2.6" height="0.8" fill="#e08040" opacity="1"/><rect x="3" y="12.9" width="2.6" height="0.8" fill="#c07030" opacity="1"/><rect x="3" y="14.9" width="2.6" height="0.8" fill="#2060a0" opacity="1"/><rect x="7.5" y="10.7" width="7" height="0.7" fill="#70a0e0" opacity="1"/><rect x="18" y="11.7" width="6.5" height="0.7" fill="#70a0e0" opacity="1"/><rect x="7.5" y="13.7" width="2" height="0.7" fill="#70a0e0" opacity="1"/><rect x="11" y="12.9" width="8.5" height="0.7" fill="#70a0e0" opacity="1"/><rect x="19" y="13.7" width="5" height="0.8" fill="#4080c0" opacity="1"/><rect x="12" y="15" width="6" height="0.6" fill="#90b0e0" opacity="1"/><rect x="7" y="16.9" width="4" height="1" fill="#205090" opacity="1"/><rect x="20.5" y="15.9" width="3.5" height="1" fill="#4070b0" opacity="1"/><rect x="29.500" y="7.800" width="8.500" height="11.700" fill="#b0b0b0"/><rect x="30.300" y="9.800" width="6.900" height="4.200" fill="#1a1a1a"/><rect x="30.300" y="17" width="3" height="1.500" fill="#d03020"/><rect x="31" y="7.300" width="2" height="1.500" fill="#666"/><rect x="34" y="7.300" width="2" height="1.500" fill="#666"/><rect x="34.300" y="15" width="3" height="3.500" fill="#999"/><rect x="19.500" y="23" width="1" height="0.600" fill="#9cc0e8"/><rect x="26.500" y="23" width="1" height="0.600" fill="#9cc0e8"/></svg>
<div class="t" style="left:0px;width:25px;text-align:right;top:569px;height:18px;line-height:18px;font-size:16px;-webkit-text-stroke:0;color:#5a5a5a">10</div>
<div class="a" style="left:31px;top:573px;width:46px;height:27px;box-sizing:border-box;border:1px solid #c6c6c6;background:#fff"></div>
<svg class="a" style="left:31px;top:573px" width="46" height="27" viewBox="0 0 46 27"><path d="M38.500,2.200 h4.500 M39,3.500 l3.500,0.600 l1,-1" stroke="#4a8ac0" stroke-width="0.900" fill="none" opacity="0.800"/><rect x="2.600" y="2.600" width="1.600" height="1.600" fill="#4a9a7a"/><rect x="4.800" y="3.200" width="7.5" height="0.700" fill="#9aa"/><rect x="3" y="10.7" width="2.6" height="0.8" fill="#e08040" opacity="1"/><rect x="3" y="12.9" width="2.6" height="0.8" fill="#c07030" opacity="1"/><rect x="3" y="14.9" width="2.6" height="0.8" fill="#2060a0" opacity="1"/><rect x="7.5" y="10.7" width="7" height="0.7" fill="#70a0e0" opacity="1"/><rect x="18" y="11.7" width="6.5" height="0.7" fill="#70a0e0" opacity="1"/><rect x="7.5" y="13.7" width="2" height="0.7" fill="#70a0e0" opacity="1"/><rect x="11" y="12.9" width="8.5" height="0.7" fill="#70a0e0" opacity="1"/><rect x="19" y="13.7" width="5" height="0.8" fill="#4080c0" opacity="1"/><rect x="12" y="15" width="4" height="0.6" fill="#90b0e0" opacity="1"/><rect x="16.5" y="15" width="1" height="0.8" fill="#e0c060" opacity="1"/><rect x="7" y="16.9" width="4" height="1" fill="#205090" opacity="1"/><rect x="20.5" y="15.9" width="3.5" height="1" fill="#4070b0" opacity="1"/><path d="M28.500,11 l5,-2 l7,2.500 l-0.500,4 l-5,3 l-6.500,-3z" fill="#8a8a8a"/><path d="M30,11.500 l3.500,-1 l1,3 l-3,2z" fill="#222"/><path d="M35,12 l4,1 l-1,3.500 l-3,1z" fill="#ddd"/><path d="M33.500,14 l3,1.500 l-1,2.500 l-2.500,-1z" fill="#333"/><rect x="19.500" y="23" width="1" height="0.600" fill="#9cc0e8"/><rect x="26.500" y="23" width="1" height="0.600" fill="#9cc0e8"/></svg>
</div>
<!-- SLIDE -->
<div id="slide">
<div class="a" style="left:157px;top:160px;width:709px;height:400px;box-sizing:border-box;border:1px solid #c6c6c6;background:#fdfdfd"></div>
<svg class="a" style="left:158px;top:161px" width="707" height="398" viewBox="158 161 707 398">
<polygon points="158,161 865,161 865,467.200 158,513.200" fill="#86b3a5"/>
<g stroke="#fff" stroke-width="1.100" fill="none" stroke-linecap="round" opacity="0.900">
<line x1="761.200" y1="161" x2="864.800" y2="368"/>
<line x1="804.4" y1="161" x2="767.6" y2="459.6"/>
<line x1="864.500" y1="367.500" x2="767.600" y2="459.600"/>
<line x1="767.6" y1="459.6" x2="784.4" y2="471.6"/>
<line x1="767.6" y1="459.6" x2="243.5" y2="442.1"/>
<line x1="158" y1="408" x2="243.5" y2="442.1"/>
<line x1="243.5" y1="442.1" x2="219.3" y2="509.8"/>
</g>
<ellipse cx="243.5" cy="442.1" rx="5.5" ry="4.3" fill="#fff"/>
<ellipse cx="863.5" cy="368" rx="3.5" ry="4.3" fill="#fff"/>
<rect x="232" y="271" width="222" height="42" fill="#e68f71"/>
<rect x="232" y="328" width="325.500" height="62.500" fill="#75ab96"/>
<path d="M774,522.500 C790,541 840,541 864,524.500 C840,536 795,536 774,522.500Z" fill="#0d3f8c"/>
</svg>
<div class="t" style="left:252px;top:275px;height:32px;line-height:32px;font-size:23.600px;color:#fff">初学者如何搭建</div>
<div class="t" style="left:245px;top:343px;height:32px;line-height:32px;font-size:23.600px;font-weight:bold;-webkit-text-stroke:0;color:#fff">一个自己专属的电子实验室</div>
<div class="t" style="left:762px;top:501px;height:30px;line-height:30px;font-size:26px;color:#0d3f8c;-webkit-text-stroke:0.550px #0d3f8c;transform-origin:0 80%;transform:scale(1,1.030)"><span style="letter-spacing:1.500px">Q</span>ia<span style="letter-spacing:1.400px">n</span>Qin</div>
<div class="t" style="left:771px;top:541px;height:18px;line-height:18px;font-size:13px;font-weight:bold;color:#1b7fc4;letter-spacing:11.400px">乾勤科技</div>
<svg class="a" style="left:0;top:0" width="924" height="629" viewBox="0 0 924 629"><rect x="784" y="504" width="5.500" height="7" fill="#fdfdfd"/><rect x="840.200" y="504" width="5.500" height="7" fill="#fdfdfd"/><circle cx="786.700" cy="508.600" r="2.400" fill="#e3211c"/><circle cx="843" cy="508.600" r="2.400" fill="#e3211c"/></svg>
</div>
<!-- NOTES -->
<div id="notes">
<div class="a" style="left:118px;top:572px;width:803px;height:1px;background:#d4d4d4"></div>
<div class="t" style="left:127.500px;top:579px;height:20px;line-height:20px;font-size:14.600px;color:#4c4c4c;-webkit-text-stroke:0">单击此处添加备注</div>
</div>
<!-- SCROLLBARS -->
<div id="scrollbars">
<div class="a" style="left:96px;top:152px;width:15px;height:15px;box-sizing:border-box;border:1px solid #ababab"></div>
<div class="a" style="left:96px;top:166px;width:15px;height:95px;box-sizing:border-box;border:1px solid #ababab"></div>
<div class="a" style="left:96px;top:589px;width:15px;height:15px;box-sizing:border-box;border:1px solid #c6c6c6"></div>
<div class="a" style="left:905px;top:152px;width:15px;height:15px;box-sizing:border-box;border:1px solid #ababab"></div>
<div class="a" style="left:905px;top:166px;width:15px;height:18px;box-sizing:border-box;border:1px solid #ababab"></div>
<div class="a" style="left:905px;top:501px;width:15px;height:15px;box-sizing:border-box;border:1px solid #c6c6c6"></div>
<svg class="a" style="left:0;top:0" width="924" height="629" viewBox="0 0 924 629">
<g fill="#777">
<polygon points="100,161 107,161 103.500,157"/>
<polygon points="100,595 107,595 103.500,599"/>
<polygon points="909,161 916,161 912.500,157"/>
<polygon points="909,507 916,507 912.500,511"/>
<polygon points="909,524.800 916,524.800 912.500,521"/>
<polygon points="909,529 916,529 912.500,525.200"/>
<polygon points="909,539 916,539 912.500,542.800"/>
<polygon points="909,543.200 916,543.200 912.500,547"/>
</g>
</svg>
</div>
<!-- STATUS -->
<div id="status">
<div class="a" style="left:2px;top:606px;width:920px;height:23px;background:#d24726"></div>
<div class="a" style="left:557px;top:607px;width:38px;height:21px;background:#b33a1c"></div>
<div class="t w" style="left:10px;top:609px;font-weight:500;word-spacing:0.900px">幻灯片 第 <span style="-webkit-text-stroke:0.400px #fff">1</span> 张，共 <span style="-webkit-text-stroke:0.400px #fff">45</span> 张</div>
<div class="t w" style="left:166px;top:609px;font-weight:500">中文(中国)</div>
<div class="t w" style="left:453px;top:609px;font-weight:500">备注</div>
<div class="t w" style="left:514px;top:609px;font-weight:500">批注</div>
<div class="t w" style="left:852px;top:609px;font-weight:500;font-size:12px;-webkit-text-stroke:0.350px #fff">56%</div>
<svg class="a" style="left:0;top:0" width="924" height="629" viewBox="0 0 924 629">
<g fill="#fff">
<!-- notes icon -->
<polygon points="440,614 445.500,614 442.750,611"/>
<rect x="437" y="616" width="11" height="1.200"/>
<rect x="437" y="619" width="11" height="1.200"/>
<rect x="437" y="622" width="7.500" height="1.200"/>
<!-- comment icon -->
<path d="M498,611 h12.500 v8.500 h-5 l-3,3.300 v-3.300 h-4.500z"/>
<!-- normal view -->
<path d="M569,610 h14.500 v12.500 h-14.500z M574.500,612.500 v4.500 h7 v-4.500z M574.500,619 v1.700 h7 v-1.700z" fill-rule="evenodd"/>
<!-- grid -->
<rect x="607" y="610" width="6" height="5.200"/><rect x="615" y="610" width="6" height="5.200"/>
<rect x="607" y="617.300" width="6" height="5.200"/><rect x="615" y="617.300" width="6" height="5.200"/>
<!-- zoom -->
<rect x="714" y="616" width="6.500" height="2"/>
<rect x="724" y="616.300" width="100" height="1"/>
<rect x="749.500" y="611" width="3.500" height="12"/>
<rect x="774" y="614.500" width="1" height="4.500"/>
<rect x="828" y="616" width="8" height="2"/><rect x="831" y="613" width="2" height="8"/>
</g>
<g fill="none" stroke="#fff" stroke-width="1.200">
<!-- reading view -->
<path d="M645.800,611 h5.200 l0.800,1 l0.800,-1 h5.200 v10.500 h-5.200 l-0.800,1.500 l-0.800,-1.500 h-5.200z"/>
<path d="M651.800,612 v10" />
<path d="M647.500,613.500 h3 M647.500,615.500 h3 M647.500,617.500 h3 M647.500,619.500 h3 M653,613.500 h3 M653,615.500 h3 M653,617.500 h3 M653,619.500 h3" stroke-width="0.900"/>
<!-- slideshow -->
<path d="M683,611.500 h13" stroke-width="1.500"/>
<path d="M684.500,612 v5.500 h10 v-5.500" />
<path d="M687,614.200 h5" stroke-width="1"/>
<path d="M689.500,617.500 v4.500 M686.500,622.300 h6"/>
<!-- fit -->
<rect x="890.600" y="610.600" width="12.800" height="12.800" rx="1"/>
<path d="M897,612 v3 M897,619 v3 M892,616.800 h3 M899,616.800 h3" stroke-width="1"/>
</g>
</svg>
</div>
</div>
</body>
</html>
